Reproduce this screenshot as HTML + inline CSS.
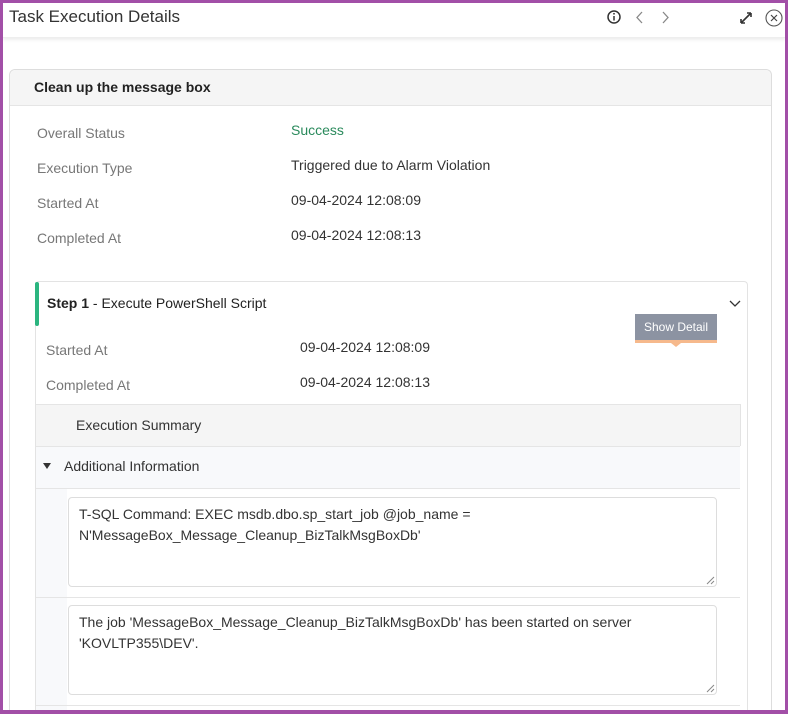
<!DOCTYPE html>
<html style="width:789px;height:714px;overflow:hidden"><head><style>
*{box-sizing:border-box;margin:0;padding:0}
body{width:789px;height:714px;background:#fff;font-family:"Liberation Sans",sans-serif;position:relative;overflow:hidden;color:#333}
.abs{position:absolute}
.lbl{color:#777;font-size:14px}
.val{color:#333;font-size:14px}
</style></head><body>
<!-- header -->
<div class="abs" style="left:3px;top:3px;width:782px;height:35px;background:#fff;box-shadow:0 2px 3px rgba(0,0,0,0.07);border-bottom:1px solid #eee"></div>
<div class="abs" style="left:9px;top:7px;font-size:17px;color:#333">Task Execution Details</div>
<svg class="abs" style="left:605px;top:8px" width="180" height="20" viewBox="0 0 180 20">
<circle cx="9" cy="9" r="6" fill="none" stroke="#333" stroke-width="1.5"/>
<line x1="9" y1="8" x2="9" y2="12.5" stroke="#333" stroke-width="1.5"/><circle cx="9" cy="5.8" r="0.9" fill="#333"/>
<path d="M37 4 L32 9.5 L37 15" fill="none" stroke="#888" stroke-width="1.3"/>
<path d="M58 4 L63 9.5 L58 15" fill="none" stroke="#888" stroke-width="1.3"/>
<path d="M136 15 L146 5 M136 15 l0 -4 M136 15 l4 0 M146 5 l-4 0 M146 5 l0 4" fill="none" stroke="#333" stroke-width="1.6"/>
<circle cx="169" cy="10" r="8" fill="none" stroke="#555" stroke-width="1.1"/>
<path d="M166 7 L172 13 M172 7 L166 13" stroke="#444" stroke-width="1.2"/>
</svg>
<!-- outer card -->
<div class="abs" style="left:9px;top:69px;width:763px;height:645px;border:1px solid #ddd;border-bottom:none;border-radius:6px 6px 0 0"></div>
<div class="abs" style="left:10px;top:70px;width:761px;height:36px;background:#f5f5f5;border-bottom:1px solid #e5e5e5;border-radius:6px 6px 0 0"></div>
<div class="abs" style="left:34px;top:79px;font-size:14px;font-weight:bold;color:#222">Clean up the message box</div>
<div class="abs lbl" style="left:37px;top:125px">Overall Status</div>
<div class="abs" style="left:291px;top:122px;font-size:14px;color:#2a8a5c">Success</div>
<div class="abs lbl" style="left:37px;top:160px">Execution Type</div>
<div class="abs val" style="left:291px;top:157px">Triggered due to Alarm Violation</div>
<div class="abs lbl" style="left:37px;top:195px">Started At</div>
<div class="abs val" style="left:291px;top:192px">09-04-2024 12:08:09</div>
<div class="abs lbl" style="left:37px;top:230px">Completed At</div>
<div class="abs val" style="left:291px;top:227px">09-04-2024 12:08:13</div>
<!-- step card -->
<div class="abs" style="left:35px;top:281px;width:713px;height:433px;border:1px solid #e3e3e3;border-bottom:none;border-radius:4px 4px 0 0"></div>
<div class="abs" style="left:35px;top:282px;width:4px;height:44px;background:#2bb57f;border-radius:2px"></div>
<div class="abs" style="left:47px;top:295px;font-size:14px;color:#222"><b>Step 1</b> - Execute PowerShell Script</div>
<svg class="abs" style="left:729px;top:299px" width="12" height="10"><path d="M1 2 L6 7 L11 2" fill="none" stroke="#333" stroke-width="1.3"/></svg>
<div class="abs" style="left:635px;top:314px;width:82px;height:29px;background:#8c93a2;border-bottom:3px solid #f6b98c;color:#fff;font-size:12px;text-align:center;line-height:27px">Show Detail</div>
<div class="abs" style="left:671px;top:343px;width:0;height:0;border-left:5px solid transparent;border-right:5px solid transparent;border-top:4px solid #f6b98c"></div>
<div class="abs lbl" style="left:46px;top:342px">Started At</div>
<div class="abs val" style="left:300px;top:339px">09-04-2024 12:08:09</div>
<div class="abs lbl" style="left:46px;top:377px">Completed At</div>
<div class="abs val" style="left:300px;top:374px">09-04-2024 12:08:13</div>
<!-- summary -->
<div class="abs" style="left:36px;top:404px;width:705px;height:42px;background:#f5f5f5;border-top:1px solid #e5e5e5;border-right:1px solid #e3e3e3"></div>
<div class="abs val" style="left:76px;top:417px;color:#333">Execution Summary</div>
<div class="abs" style="left:36px;top:446px;width:704px;height:43px;background:#f8f9fb;border-top:1px solid #e5e5e5;border-bottom:1px solid #e5e5e5"></div>
<div class="abs" style="left:43px;top:463px;width:0;height:0;border-left:4px solid transparent;border-right:4px solid transparent;border-top:6px solid #333"></div>
<div class="abs val" style="left:64px;top:458px">Additional Information</div>
<div class="abs" style="left:36px;top:489px;width:31px;height:222px;background:#f8f9fb"></div>
<div class="abs" style="left:68px;top:497px;width:649px;height:90px;border:1px solid #ddd;border-radius:4px;padding:6px 10px;font-size:14px;line-height:21px;color:#333">T-SQL Command: EXEC msdb.dbo.sp_start_job @job_name =<br>N'MessageBox_Message_Cleanup_BizTalkMsgBoxDb'</div>
<div class="abs" style="left:36px;top:597px;width:704px;height:1px;background:#e5e5e5"></div>
<div class="abs" style="left:68px;top:605px;width:649px;height:90px;border:1px solid #ddd;border-radius:4px;padding:6px 10px;font-size:14px;line-height:21px;color:#333">The job 'MessageBox_Message_Cleanup_BizTalkMsgBoxDb' has been started on server<br>'KOVLTP355\DEV'.</div>
<svg class="abs" style="left:706px;top:576px" width="9" height="9"><path d="M1 8 L8 1 M5 8 L8 5" stroke="#888"/></svg>
<svg class="abs" style="left:706px;top:684px" width="9" height="9"><path d="M1 8 L8 1 M5 8 L8 5" stroke="#888"/></svg>
<div class="abs" style="left:36px;top:705px;width:704px;height:1px;background:#e5e5e5"></div>
<!-- purple frame -->
<div class="abs" style="left:0;top:0;width:788px;height:714px;border:3px solid #a24fa7;border-bottom-width:4px"></div>
</body></html>
